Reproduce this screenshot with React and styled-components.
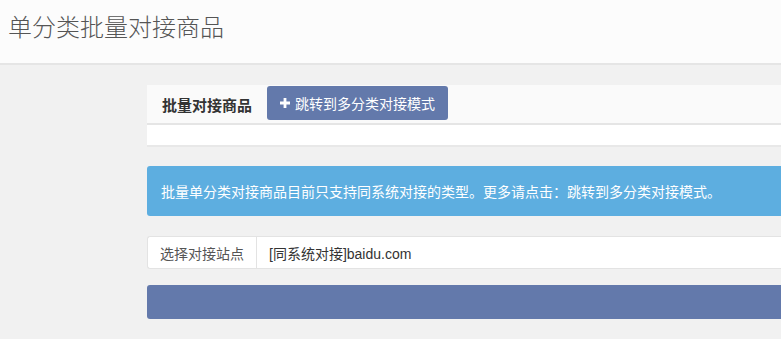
import styled, { createGlobalStyle } from "styled-components"

const GlobalStyle = createGlobalStyle`
  html, body {
    margin: 0;
    padding: 0;
    background: #f1f1f1;
    overflow: hidden;
  }
  body {
    font-family: "Liberation Sans", "Noto Sans CJK SC", sans-serif;
    font-size: 14px;
    color: #333;
  }
  * { box-sizing: border-box; }
`

const TopBar = styled.header`
  height: 65px;
  background: #fcfcfc;
  border-bottom: 2px solid #e5e5e5;
  padding: 13px 8px 0;
`

const PageTitle = styled.h1`
  margin: 0;
  font-size: 24px;
  line-height: 30px;
  font-weight: 300;
  color: #555;
`

const Content = styled.main`
  width: calc(100vw - 147px);
  margin-left: 147px;
  padding-top: 20px;
  display: flex;
  flex-direction: column;
`

const Panel = styled.section`
  background: #fff;
  border-bottom: 2px solid #e8e8e8;
  margin-bottom: 19px;
`

const PanelHead = styled.div`
  display: flex;
  align-items: center;
  height: 40px;
  padding: 0 15px;
  background: #fafafa;
  border-bottom: 2px solid #e5e5e5;
`

const PanelTitle = styled.h2`
  margin: 0 15px 0 0;
  font-size: 15px;
  font-weight: 700;
  color: #333;
`

const Button = styled.button`
  display: flex;
  align-items: center;
  gap: 5px;
  height: 34px;
  padding: 0 13px 0 13px;
  margin-top: -2px;
  border: none;
  border-radius: 3px;
  background: #6379ab;
  color: #fff;
  font-family: inherit;
  font-size: 14px;
`

const PanelBody = styled.div`
  height: 20px;
`

const Alert = styled.div`
  height: 50px;
  display: flex;
  align-items: center;
  padding: 0 14px;
  border-radius: 3px 0 0 3px;
  background: #5daee0;
  color: #fff;
  margin-bottom: 20px;
`

const InputGroup = styled.div`
  display: flex;
  height: 33px;
  background: #fff;
  border: 1px solid #e3e3e3;
  border-right: none;
  border-radius: 3px 0 0 3px;
  margin-bottom: 16px;
`

const Addon = styled.span`
  display: flex;
  align-items: center;
  width: 109px;
  padding: 0 12px;
  color: #555;
  border-right: 1px solid #e3e3e3;
`

const Field = styled.span`
  display: flex;
  align-items: center;
  padding: 0 12px;
  color: #333;
`

const SubmitBar = styled.div`
  height: 34px;
  border-radius: 3px 0 0 3px;
  background: #6379ab;
`

function PlusIcon() {
  return (
    <svg width="10" height="10" viewBox="0 0 10 10">
      <path d="M3.6 0h2.8v3.6H10v2.8H6.4V10H3.6V6.4H0V3.6h3.6z" fill="#fff" />
    </svg>
  )
}

export default function App() {
  return (
    <>
      <GlobalStyle />
      <TopBar>
        <PageTitle>单分类批量对接商品</PageTitle>
      </TopBar>
      <Content>
        <Panel>
          <PanelHead>
            <PanelTitle>批量对接商品</PanelTitle>
            <Button>
              <PlusIcon />
              跳转到多分类对接模式
            </Button>
          </PanelHead>
          <PanelBody />
        </Panel>
        <Alert>
          批量单分类对接商品目前只支持同系统对接的类型。更多请点击：跳转到多分类对接模式。
        </Alert>
        <InputGroup>
          <Addon>选择对接站点</Addon>
          <Field>[同系统对接]baidu.com</Field>
        </InputGroup>
        <SubmitBar />
      </Content>
    </>
  )
}
